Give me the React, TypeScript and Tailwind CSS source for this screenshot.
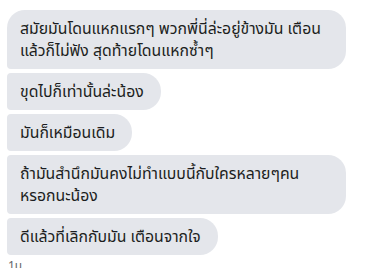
import React from "react";

const font = { fontFamily: '"Noto Sans Thai", "Noto Sans", Tahoma, sans-serif' };

export default function App() {
  const msgs: { lines: string[]; wide?: boolean }[] = [
    { lines: ["สมัยมันโดนแหกแรกๆ พวกพี่นี่ล่ะอยู่ข้างมัน เตือน", "แล้วก็ไม่ฟัง สุดท้ายโดนแหกซ้ำๆ"], wide: true },
    { lines: ["ขุดไปก็เท่านั้นล่ะน้อง"] },
    { lines: ["มันก็เหมือนเดิม"] },
    { lines: ["ถ้ามันสำนึกมันคงไม่ทำแบบนี้กับใครหลายๆคน", "หรอกนะน้อง"], wide: true },
    { lines: ["ดีแล้วที่เลิกกับมัน เตือนจากใจ"] },
  ];

  return (
    <div className="w-[369px] h-[268px] overflow-hidden bg-white" style={font}>
      <div className="flex flex-col items-start gap-1 pt-[10px] pl-[7px]">
        {msgs.map((m, i) => {
          const first = i === 0;
          return (
            <div
              key={i}
              className={
                "bg-[#e4e6eb] text-[#1c1e21] text-[15.8px] leading-[22px] pl-[13px] pr-[17px] pt-[8px] pb-[7px] rounded-r-[18px] whitespace-nowrap " +
                (first ? "rounded-tl-[18px] rounded-bl-[4px] " : "rounded-l-[4px] ") +
                (m.wide ? "w-[339px]" : "w-fit")
              }
            >
              {m.lines.map((l, j) => (
                <div key={j}>{l}</div>
              ))}
            </div>
          );
        })}
        <div className="text-[12px] leading-[14px] text-[#65676b] pl-[1px]">1น</div>
      </div>
    </div>
  );
}
